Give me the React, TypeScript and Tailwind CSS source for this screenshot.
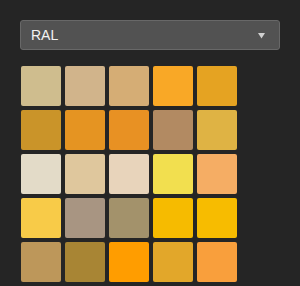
import React from "react";

const colors = [
  "#cfbd8e", "#d1b48b", "#d5ad75", "#f9a826", "#e5a322",
  "#ca9429", "#e59422", "#e89123", "#b28a62", "#dfb344",
  "#e3dbc8", "#dfc79d", "#e8d4bb", "#f2df4f", "#f5ad64",
  "#f8cb48", "#a89582", "#a3926b", "#f6bb00", "#f7bc00",
  "#bd975a", "#a88534", "#ff9d00", "#e2a72a", "#f99f3c",
];

export default function App() {
  return (
    <div
      className="w-[300px] h-[286px] bg-[#252525] pt-5 px-5 overflow-hidden"
      style={{ fontFamily: '"Liberation Sans", Arial, sans-serif' }}
    >
      <div className="h-[30px] w-[260px] rounded-[3px] border border-[#686868] bg-[#525252] flex items-center justify-between pl-[10px] pr-[14px]">
        <span className="text-[14px] text-[#f2f2f2]">RAL</span>
        <svg width="7" height="6" viewBox="0 0 7 6" className="mt-[1px]">
          <polygon points="0,0 7,0 3.5,5.5" fill="#d0d0d0" />
        </svg>
      </div>
      <div className="mt-4 ml-[1px] grid grid-cols-[repeat(5,40px)] gap-1">
        {colors.map((c, i) => (
          <div key={i} className="w-10 h-10 rounded-[2px]" style={{ backgroundColor: c }} />
        ))}
      </div>
    </div>
  );
}
